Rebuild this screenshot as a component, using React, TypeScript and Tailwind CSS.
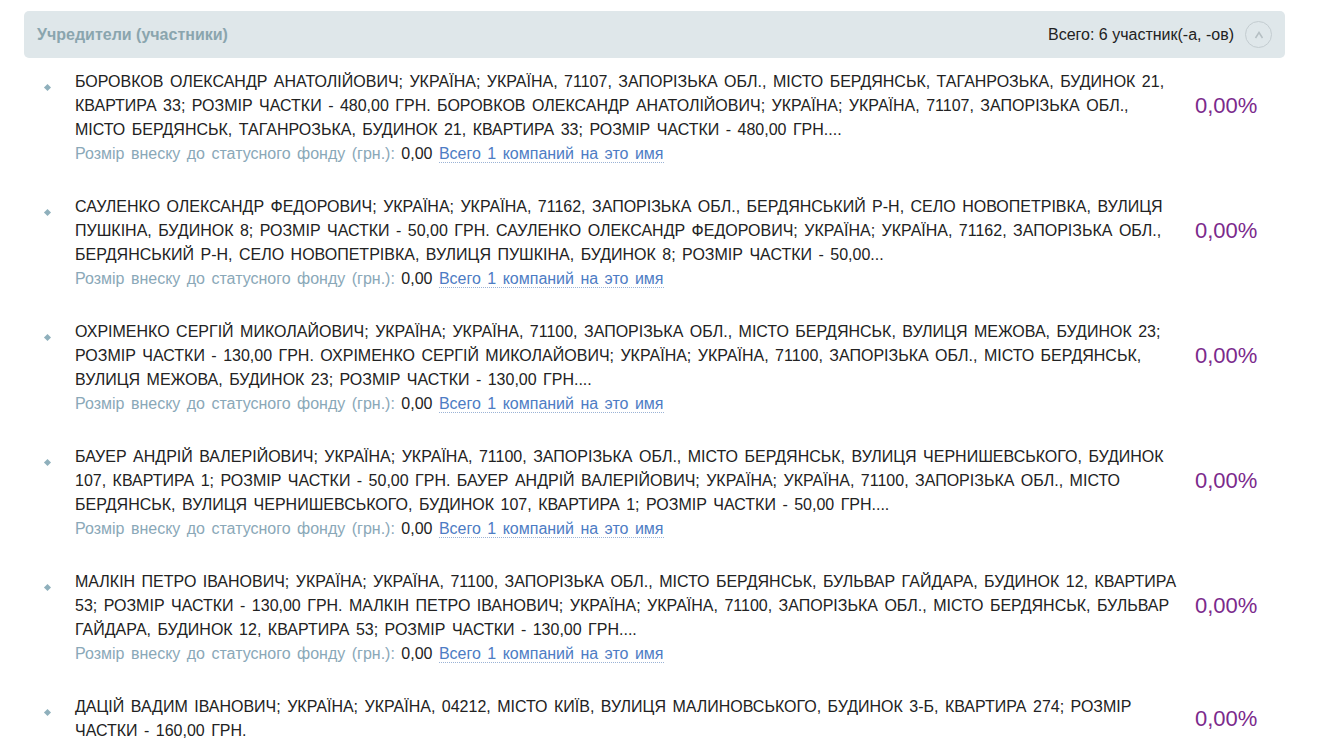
import * as React from "react"

type Founder = {
  text: string
  share: string
}

const founders: Founder[] = [
  {
    text: "БОРОВКОВ ОЛЕКСАНДР АНАТОЛІЙОВИЧ; УКРАЇНА; УКРАЇНА, 71107, ЗАПОРІЗЬКА ОБЛ., МІСТО БЕРДЯНСЬК, ТАГАНРОЗЬКА, БУДИНОК 21, КВАРТИРА 33; РОЗМІР ЧАСТКИ - 480,00 ГРН. БОРОВКОВ ОЛЕКСАНДР АНАТОЛІЙОВИЧ; УКРАЇНА; УКРАЇНА, 71107, ЗАПОРІЗЬКА ОБЛ., МІСТО БЕРДЯНСЬК, ТАГАНРОЗЬКА, БУДИНОК 21, КВАРТИРА 33; РОЗМІР ЧАСТКИ - 480,00 ГРН....",
    share: "0,00%",
  },
  {
    text: "САУЛЕНКО ОЛЕКСАНДР ФЕДОРОВИЧ; УКРАЇНА; УКРАЇНА, 71162, ЗАПОРІЗЬКА ОБЛ., БЕРДЯНСЬКИЙ Р-Н, СЕЛО НОВОПЕТРІВКА, ВУЛИЦЯ ПУШКІНА, БУДИНОК 8; РОЗМІР ЧАСТКИ - 50,00 ГРН. САУЛЕНКО ОЛЕКСАНДР ФЕДОРОВИЧ; УКРАЇНА; УКРАЇНА, 71162, ЗАПОРІЗЬКА ОБЛ., БЕРДЯНСЬКИЙ Р-Н, СЕЛО НОВОПЕТРІВКА, ВУЛИЦЯ ПУШКІНА, БУДИНОК 8; РОЗМІР ЧАСТКИ - 50,00...",
    share: "0,00%",
  },
  {
    text: "ОХРІМЕНКО СЕРГІЙ МИКОЛАЙОВИЧ; УКРАЇНА; УКРАЇНА, 71100, ЗАПОРІЗЬКА ОБЛ., МІСТО БЕРДЯНСЬК, ВУЛИЦЯ МЕЖОВА, БУДИНОК 23; РОЗМІР ЧАСТКИ - 130,00 ГРН. ОХРІМЕНКО СЕРГІЙ МИКОЛАЙОВИЧ; УКРАЇНА; УКРАЇНА, 71100, ЗАПОРІЗЬКА ОБЛ., МІСТО БЕРДЯНСЬК, ВУЛИЦЯ МЕЖОВА, БУДИНОК 23; РОЗМІР ЧАСТКИ - 130,00 ГРН....",
    share: "0,00%",
  },
  {
    text: "БАУЕР АНДРІЙ ВАЛЕРІЙОВИЧ; УКРАЇНА; УКРАЇНА, 71100, ЗАПОРІЗЬКА ОБЛ., МІСТО БЕРДЯНСЬК, ВУЛИЦЯ ЧЕРНИШЕВСЬКОГО, БУДИНОК 107, КВАРТИРА 1; РОЗМІР ЧАСТКИ - 50,00 ГРН. БАУЕР АНДРІЙ ВАЛЕРІЙОВИЧ; УКРАЇНА; УКРАЇНА, 71100, ЗАПОРІЗЬКА ОБЛ., МІСТО БЕРДЯНСЬК, ВУЛИЦЯ ЧЕРНИШЕВСЬКОГО, БУДИНОК 107, КВАРТИРА 1; РОЗМІР ЧАСТКИ - 50,00 ГРН....",
    share: "0,00%",
  },
  {
    text: "МАЛКІН ПЕТРО ІВАНОВИЧ; УКРАЇНА; УКРАЇНА, 71100, ЗАПОРІЗЬКА ОБЛ., МІСТО БЕРДЯНСЬК, БУЛЬВАР ГАЙДАРА, БУДИНОК 12, КВАРТИРА 53; РОЗМІР ЧАСТКИ - 130,00 ГРН. МАЛКІН ПЕТРО ІВАНОВИЧ; УКРАЇНА; УКРАЇНА, 71100, ЗАПОРІЗЬКА ОБЛ., МІСТО БЕРДЯНСЬК, БУЛЬВАР ГАЙДАРА, БУДИНОК 12, КВАРТИРА 53; РОЗМІР ЧАСТКИ - 130,00 ГРН....",
    share: "0,00%",
  },
  {
    text: "ДАЦІЙ ВАДИМ ІВАНОВИЧ; УКРАЇНА; УКРАЇНА, 04212, МІСТО КИЇВ, ВУЛИЦЯ МАЛИНОВСЬКОГО, БУДИНОК 3-Б, КВАРТИРА 274; РОЗМІР ЧАСТКИ - 160,00 ГРН.",
    share: "0,00%",
  },
]

function FounderItem({ founder }: { founder: Founder }) {
  return (
    <li className="flex mb-[29px]">
      <div className="w-[51px] shrink-0">
        <div className="ml-[21px] mt-[15px] w-[5px] h-[5px] rotate-45 bg-[#8fb0bc]" />
      </div>
      <div className="flex-1 min-w-0">
        <div className="flex items-center">
          <p className="flex-1 min-w-0 text-[16px] leading-[24px] [word-spacing:2px] text-[#222]">
            {founder.text}
          </p>
          <div className="w-[78px] shrink-0 pl-[13px] text-[22px] leading-[24px] text-[#7b2a8c]">
            {founder.share}
          </div>
        </div>
        <div className="text-[16px] leading-[24px] [word-spacing:2px]">
          <span className="text-[#8aa8b8]">Розмір внеску до статусного фонду (грн.): </span>
          <span className="text-[#222]">0,00</span>{" "}
          <a className="text-[#4d7cc4] border-b border-dotted border-[#9bb3d6] cursor-pointer">
            Всего 1 компаний на это имя
          </a>
        </div>
      </div>
    </li>
  )
}

export default function App() {
  return (
    <div className="min-h-screen bg-white pl-6 pr-[54px] pt-[11px] font-['Liberation_Sans',Arial,sans-serif]">
      <div className="flex items-center justify-between h-[47px] rounded-[5px] bg-[#dfe7ea] pl-[13px] pr-[13px]">
        <span className="text-[16px] font-bold text-[#8aa5ae]">Учредители (участники)</span>
        <div className="flex items-center gap-[11px]">
          <span className="text-[16px] text-[#222]">Всего: 6 участник(-а, -ов)</span>
          <button className="flex items-center justify-center w-[27px] h-[27px] rounded-full border-[1.5px] border-[#c3ccd0]">
            <svg width="10" height="8" viewBox="0 0 10 8" fill="none">
              <path d="M1.5 7 L5 1.5 L8.5 7" stroke="#b5bfc3" strokeWidth="1.5" />
            </svg>
          </button>
        </div>
      </div>
      <ul className="mt-[12px] pr-[25px]">
        {founders.map((f, i) => (
          <FounderItem key={i} founder={f} />
        ))}
      </ul>
    </div>
  )
}
